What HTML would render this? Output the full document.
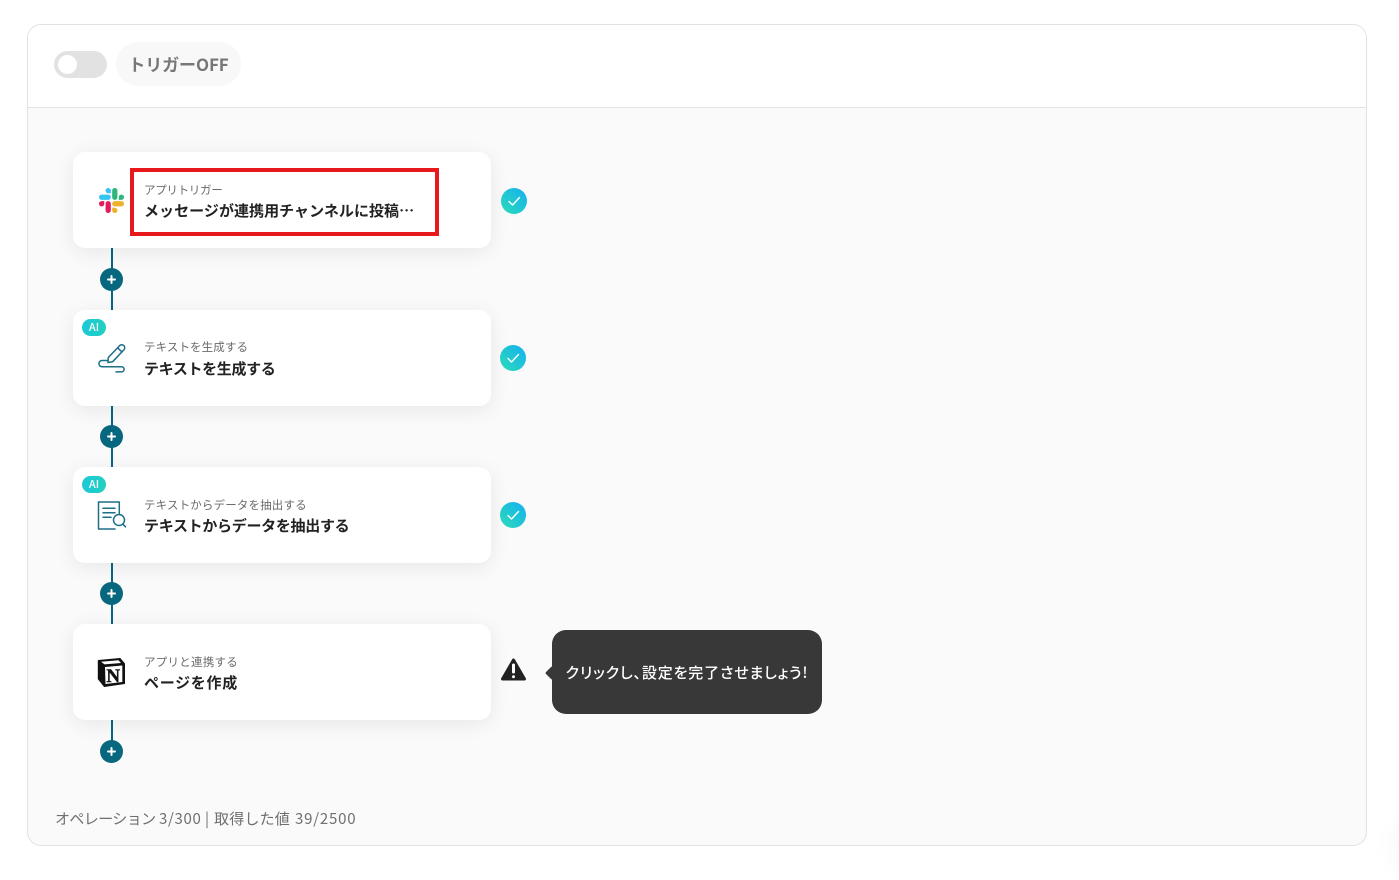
<!DOCTYPE html>
<html lang="ja">
<head>
<meta charset="utf-8">
<style>
html,body{margin:0;padding:0;width:1399px;height:872px;background:#fff;overflow:hidden;font-family:"Noto Sans CJK JP","Liberation Sans",sans-serif;}
.abs{position:absolute;}
#frame{left:27px;top:24px;width:1338px;height:820px;border:1px solid #e2e2e2;border-radius:14px;background:#fafafa;overflow:hidden;}
#head{left:0;top:0;width:1338px;height:82px;background:#fff;border-bottom:1px solid #e2e2e2;}
#toggle{left:54px;top:51px;width:53px;height:27px;border-radius:14px;background:#e2e2e2;}
#knob{left:58px;top:55px;width:19px;height:19px;border-radius:50%;background:#fff;}
#pill{left:116px;top:42px;width:125px;height:44px;border-radius:22px;background:#f8f8f8;color:#777;font-size:17px;font-weight:700;line-height:44px;text-align:center;white-space:nowrap;letter-spacing:-.1px;}
.card{left:73px;width:418px;height:96px;border-radius:12px;background:#fff;box-shadow:0 4px 20px rgba(0,0,0,.08);}
.sub{left:144px;font-size:11.5px;line-height:16px;color:#6b6b6b;white-space:nowrap;}
.ttl{left:144px;font-size:15px;line-height:22px;font-weight:700;color:#222;white-space:nowrap;}
.line{left:111px;width:2px;background:#07677f;}
.plus{left:100px;width:23px;height:23px;}
.check{width:26px;height:26px;}
.ai{left:82px;width:24px;height:17px;border-radius:9px;background:linear-gradient(90deg,#1cc8d8,#22d0c0);color:#fff;font:500 11px/17px "Noto Sans CJK JP",sans-serif;text-align:center;}
#redbox{left:130px;top:168px;width:301px;height:60px;border:4px solid #e8191c;}
#tip{left:552px;top:630px;width:270px;height:84px;border-radius:14px;background:#383838;color:#fff;font-size:15px;font-weight:500;line-height:86px;text-align:center;white-space:nowrap;font-feature-settings:"palt";letter-spacing:.85px;}
#arrow{left:545px;top:666px;width:14px;height:14px;background:#383838;transform:rotate(45deg) scale(.7);border-radius:2px;}
.foot{top:808px;font-size:15px;line-height:22px;color:#6f6f6f;white-space:nowrap;}
#glow{left:1375px;top:810px;width:60px;height:70px;background:radial-gradient(closest-side,rgba(0,0,0,.025),rgba(0,0,0,0));}
</style>
</head>
<body>
<div id="frame" class="abs"><div id="head" class="abs"></div></div>
<div id="glow" class="abs"></div>
<div id="toggle" class="abs"></div><div id="knob" class="abs"></div>
<div id="pill" class="abs">トリガーOFF</div>

<div class="abs line" style="top:248px;height:62px"></div>
<div class="abs line" style="top:405px;height:62px"></div>
<div class="abs line" style="top:563px;height:61px"></div>
<div class="abs line" style="top:720px;height:30px"></div>

<div class="abs card" style="top:152px"></div>
<div class="abs card" style="top:310px"></div>
<div class="abs card" style="top:467px"></div>
<div class="abs card" style="top:624px"></div>

<svg class="abs plus" style="top:268px" viewBox="0 0 23 23"><circle cx="11.5" cy="11.500" r="11.500" fill="#07677f"/><path d="M11.500 8v7M8 11.500h7" stroke="#fff" stroke-width="2" stroke-linecap="round"/></svg>
<svg class="abs plus" style="top:425px" viewBox="0 0 23 23"><circle cx="11.5" cy="11.500" r="11.500" fill="#07677f"/><path d="M11.500 8v7M8 11.500h7" stroke="#fff" stroke-width="2" stroke-linecap="round"/></svg>
<svg class="abs plus" style="top:582px" viewBox="0 0 23 23"><circle cx="11.5" cy="11.500" r="11.500" fill="#07677f"/><path d="M11.500 8v7M8 11.500h7" stroke="#fff" stroke-width="2" stroke-linecap="round"/></svg>
<svg class="abs plus" style="top:740px" viewBox="0 0 23 23"><circle cx="11.5" cy="11.500" r="11.500" fill="#07677f"/><path d="M11.500 8v7M8 11.500h7" stroke="#fff" stroke-width="2" stroke-linecap="round"/></svg>

<!-- Slack -->
<svg class="abs" style="left:99px;top:188px" width="25" height="25" viewBox="0 0 122.800 122.800">
<path fill="#e01e5a" d="M25.800 77.600c0 7.100-5.800 12.900-12.900 12.900S0 84.700 0 77.600s5.800-12.900 12.900-12.900h12.900v12.900z"/>
<path fill="#e01e5a" d="M32.300 77.600c0-7.100 5.800-12.900 12.900-12.900s12.900 5.800 12.900 12.900v32.300c0 7.100-5.800 12.900-12.900 12.900s-12.900-5.800-12.900-12.900V77.600z"/>
<path fill="#36c5f0" d="M45.200 25.800c-7.100 0-12.900-5.800-12.900-12.900S38.100 0 45.200 0s12.900 5.800 12.900 12.900v12.900H45.200z"/>
<path fill="#36c5f0" d="M45.200 32.300c7.100 0 12.900 5.800 12.900 12.900s-5.800 12.900-12.900 12.900H12.900C5.800 58.100 0 52.300 0 45.200s5.800-12.900 12.900-12.900h32.300z"/>
<path fill="#2eb67d" d="M97 45.200c0-7.100 5.800-12.900 12.900-12.900s12.900 5.800 12.900 12.900-5.800 12.900-12.900 12.900H97V45.200z"/>
<path fill="#2eb67d" d="M90.500 45.200c0 7.100-5.800 12.900-12.900 12.900s-12.900-5.800-12.900-12.900V12.900C64.700 5.800 70.500 0 77.600 0s12.900 5.800 12.900 12.900v32.300z"/>
<path fill="#ecb22e" d="M77.600 97c7.100 0 12.900 5.800 12.900 12.900s-5.800 12.900-12.900 12.900-12.900-5.800-12.900-12.900V97h12.900z"/>
<path fill="#ecb22e" d="M77.600 90.500c-7.100 0-12.900-5.800-12.900-12.900s5.800-12.900 12.900-12.900h32.300c7.100 0 12.900 5.800 12.900 12.900s-5.800 12.900-12.900 12.900H77.600z"/>
</svg>

<div class="abs ai" style="top:319px">AI</div>
<div class="abs ai" style="top:476px">AI</div>

<!-- Pen -->
<svg class="abs" style="left:95px;top:340px" width="35" height="36" viewBox="95 340 35 36" fill="none" stroke="#1c6f86" stroke-width="1.500" stroke-linecap="round" stroke-linejoin="round">
<path d="M108 362.500L108.300 357.500 119.800 345.500A3 3 0 0 1 124.200 349.500L112.700 361.700z"/>
<path d="M117.600 347.800L122 351.900"/>
<path d="M108 360.500h-6a3 3 0 0 0 0 6.200h19.500a2.600 2.600 0 0 1 0 5.200H116"/>
</svg>

<!-- Doc search -->
<svg class="abs" style="left:95px;top:498px" width="35" height="35" viewBox="95 498 35 35" fill="none" stroke="#1c6f86" stroke-width="1.500" stroke-linecap="round" stroke-linejoin="round">
<path d="M115 529H98.500V502h20.800v11.500"/>
<path d="M103 508.300h12M103 512.700h12M103 517.300h8"/>
<circle cx="119" cy="520" r="5.500"/>
<path d="M123 524.300l2.500 2.500"/>
</svg>

<!-- Notion -->
<svg class="abs" style="left:95px;top:655px" width="33" height="34" viewBox="95 655 33 34">
<path d="M98.300 660.500L120 658.500l4.500 5.200V683.500L104.300 686.500 98.300 679z" fill="#111" stroke="#111" stroke-linejoin="round"/>
<path d="M105 667L122.300 665.500V682L105.500 684z" fill="#fff"/>
<path d="M101 661.800L118.500 660.200l2.500 2.800-16.500 1.400z" fill="#fff"/>
<text x="113.200" y="682" text-anchor="middle" font-family="Liberation Serif,serif" font-weight="700" font-size="19" fill="#111" stroke="#111" stroke-width=".4">N</text>
</svg>

<div class="abs sub" style="top:182px;letter-spacing:-.3px">アプリトリガー</div>
<div class="abs ttl" style="top:200px;letter-spacing:.05px">メッセージが連携用チャンネルに投稿…</div>
<div class="abs sub" style="top:339px;letter-spacing:.1px">テキストを生成する</div>
<div class="abs ttl" style="top:358px;letter-spacing:-.35px">テキストを生成する</div>
<div class="abs sub" style="top:497px;letter-spacing:.15px">テキストからデータを抽出する</div>
<div class="abs ttl" style="top:515px;letter-spacing:-.3px">テキストからデータを抽出する</div>
<div class="abs sub" style="top:654px;letter-spacing:.25px">アプリと連携する</div>
<div class="abs ttl" style="top:672px;letter-spacing:.7px">ページを作成</div>

<div id="redbox" class="abs"></div>

<svg width="0" height="0" style="position:absolute"><defs><linearGradient id="g" x1="1" y1="0" x2="0" y2="1"><stop offset="0" stop-color="#14b0f0"/><stop offset="1" stop-color="#2cdcb8"/></linearGradient></defs></svg>
<svg class="abs check" style="left:501px;top:188px" viewBox="0 0 26 26"><circle cx="13" cy="13" r="13" fill="url(#g)"/><path d="M8 13.500l3.500 3.500L18.500 9.500" fill="none" stroke="#fff" stroke-width="1.400" stroke-linecap="round" stroke-linejoin="round"/></svg>
<svg class="abs check" style="left:500px;top:345px" viewBox="0 0 26 26"><circle cx="13" cy="13" r="13" fill="url(#g)"/><path d="M8 13.500l3.500 3.500L18.500 9.500" fill="none" stroke="#fff" stroke-width="1.400" stroke-linecap="round" stroke-linejoin="round"/></svg>
<svg class="abs check" style="left:500px;top:502px" viewBox="0 0 26 26"><circle cx="13" cy="13" r="13" fill="url(#g)"/><path d="M8 13.500l3.500 3.500L18.500 9.500" fill="none" stroke="#fff" stroke-width="1.400" stroke-linecap="round" stroke-linejoin="round"/></svg>

<svg class="abs" style="left:500px;top:657px" width="27" height="25" viewBox="0 0 27 25"><path d="M13.500 3L24.500 22H2.500z" fill="#222" stroke="#222" stroke-width="3" stroke-linejoin="round"/><path d="M13.500 8v7" stroke="#fff" stroke-width="3" stroke-linecap="round"/><circle cx="13.500" cy="19.700" r="1.500" fill="#fff"/></svg>

<div id="arrow" class="abs"></div>
<div id="tip" class="abs">クリックし、設定を完了させましょう!</div>
<div class="abs foot" style="left:55px;letter-spacing:-.6px">オペレーション</div>
<div class="abs foot" style="left:159px;letter-spacing:.65px">3/300</div>
<div class="abs foot" style="left:205px">|</div>
<div class="abs foot" style="left:214px;letter-spacing:.2px">取得した値</div>
<div class="abs foot" style="left:295px;letter-spacing:.8px">39/2500</div>
</body>
</html>
